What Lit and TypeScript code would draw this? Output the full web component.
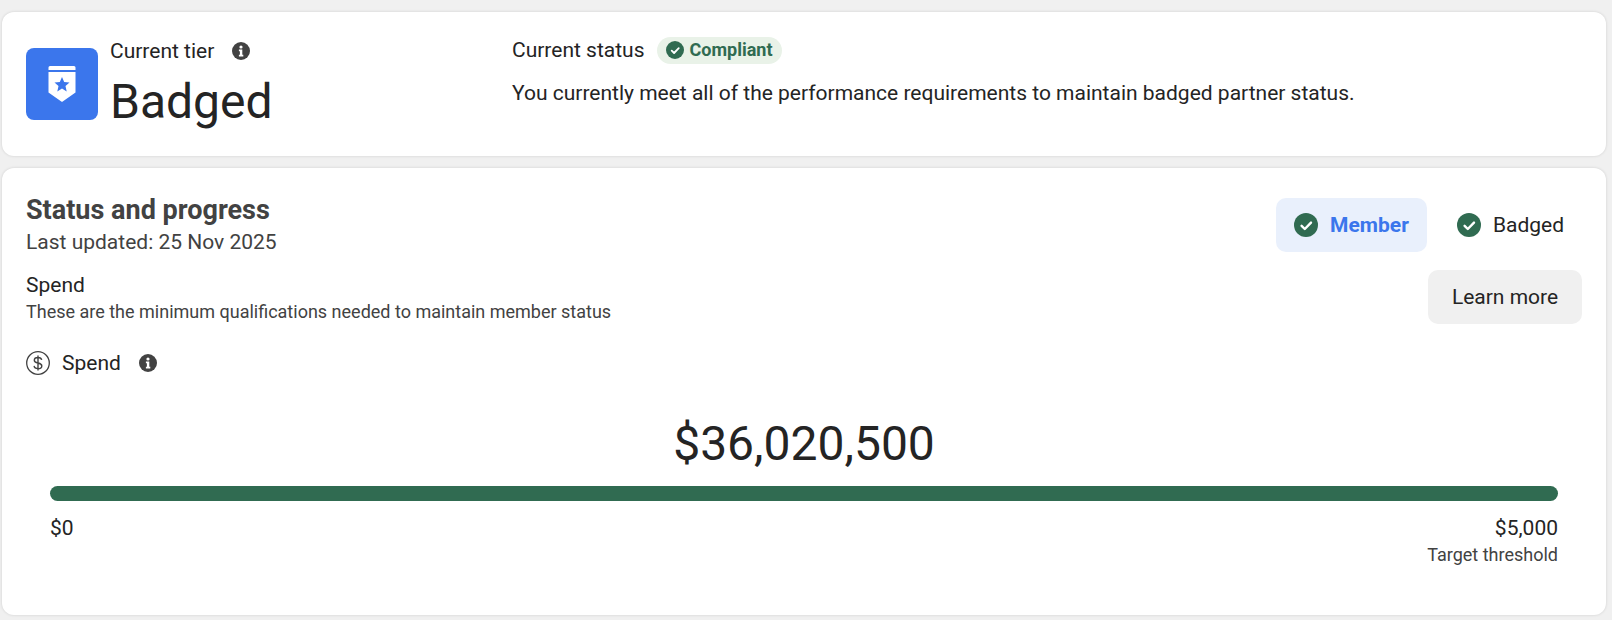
import { css, html, LitElement } from "lit";
import { customElement } from "lit/decorators.js";

const infoIcon = html`<svg class="info" viewBox="0 0 18 18" width="18" height="18">
  <circle cx="9" cy="9" r="9" fill="#424242"></circle>
  <circle cx="9" cy="5" r="1.6" fill="#fff"></circle>
  <path d="M6.9 7.6h3.4v5.2h1v1.6H6.9v-1.6h1v-3.6h-1z" fill="#fff"></path>
</svg>`;

const checkIcon = (size: number) => html`<svg viewBox="0 0 24 24" width=${size} height=${size}>
  <circle cx="12" cy="12" r="12" fill="#306b51"></circle>
  <path d="M7.6 12.8l3.200 3.200L17 9.600" fill="none" stroke="#fff" stroke-width="2.400" stroke-linecap="round" stroke-linejoin="round"></path>
</svg>`;

@customElement("app-root")
export class AppRoot extends LitElement {
    render() {
        return html`
      <section class="card tier-card">
        <div class="tier">
          <div class="tier-icon">
            <svg viewBox="0 0 28 36" width="28" height="36">
              <path d="M2 0h24a1.500 1.500 0 0 1 1.500 1.500V4H.5V1.500A1.500 1.500 0 0 1 2 0z" fill="#fff"></path>
              <path fill-rule="evenodd" fill="#fff" d="M.5 6h27v20.500L14.700 35.500a1.300 1.300 0 0 1-1.400 0L.5 26.500zM14 11l-2.200 5-5.300.5 4 3.600-1.200 5.300L14 22.600l4.700 2.800-1.200-5.300 4-3.600-5.300-.5z"></path>
            </svg>
          </div>
          <div class="tier-text">
            <div class="tier-label"><span>Current tier</span>${infoIcon}</div>
            <div class="tier-name">Badged</div>
          </div>
        </div>
        <div class="status">
          <div class="status-line">
            <span>Current status</span>
            <span class="pill">${checkIcon(18)}Compliant</span>
          </div>
          <div class="status-text">You currently meet all of the performance requirements to maintain badged partner status.</div>
        </div>
      </section>

      <section class="card progress-card">
        <div class="progress-head">
          <div>
            <h2>Status and progress</h2>
            <div class="updated">Last updated: 25 Nov 2025</div>
          </div>
          <div class="tabs">
            <div class="tab active">${checkIcon(24)}<span>Member</span></div>
            <div class="tab">${checkIcon(24)}<span>Badged</span></div>
          </div>
        </div>
        <div class="spend-head">
          <div class="spend-copy">
            <div>Spend</div>
            <div class="spend-sub">These are the minimum qualifications needed to maintain member status</div>
          </div>
          <button>Learn more</button>
        </div>
        <div class="metric">
          <svg viewBox="0 0 24 24" width="24" height="24">
            <circle cx="12" cy="12" r="11.300" fill="none" stroke="#424242" stroke-width="1.300"></circle>
            <path d="M15.700 8.900c-.3-1.500-1.700-2.400-3.700-2.400-2.100 0-3.700 1-3.700 2.700 0 3.900 7.500 1.800 7.500 5.700 0 1.700-1.600 2.700-3.800 2.700s-3.700-1-3.900-2.700M12 4.500v15" fill="none" stroke="#424242" stroke-width="1.400"></path>
          </svg>
          <span>Spend</span>
          ${infoIcon}
        </div>
        <div class="amount">$36,020,500</div>
        <div class="bar"></div>
        <div class="scale">
          <div>$0</div>
          <div class="target">
            <div>$5,000</div>
            <div class="target-label">Target threshold</div>
          </div>
        </div>
      </section>
    `;
    }

    static styles = css`
      :host {
        display: flex;
        flex-direction: column;
        gap: 12px;
        box-sizing: border-box;
        width: 1612px;
        height: 620px;
        padding: 12px 6px 5px 2px;
        background: #f0f0f0;
        font-family: Roboto, sans-serif;
        font-size: 21px;
        line-height: 28px;
        color: #242424;
      }

      .card {
        box-sizing: border-box;
        background: #fff;
        border-radius: 12px;
        box-shadow: 0 0 3px rgba(0, 0, 0, 0.14);
      }

      .tier-card {
        display: flex;
        height: 144px;
        padding: 24px;
      }

      .tier {
        display: flex;
        gap: 12px;
        width: 486px;
      }

      .tier-icon {
        display: flex;
        align-items: center;
        justify-content: center;
        width: 72px;
        height: 72px;
        margin-top: 12px;
        border-radius: 8px;
        background: #3b76ec;
      }

      .tier-text {
        padding-top: 1px;
      }

      .tier-label {
        display: flex;
        align-items: center;
        gap: 18px;
      }

      .tier-name {
        margin-top: 9px;
        font-size: 48px;
        line-height: 56px;
      }

      .status-line {
        display: flex;
        align-items: center;
        gap: 12px;
      }

      .pill {
        display: flex;
        align-items: center;
        gap: 6px;
        height: 27px;
        padding: 0 9px;
        border-radius: 14px;
        background: #e9f2e8;
        color: #306b51;
        font-size: 18px;
        font-weight: 700;
      }

      .status-text {
        margin-top: 15px;
      }

      .progress-card {
        flex: 1;
        padding: 24px;
      }

      .progress-head,
      .spend-head {
        display: flex;
        justify-content: space-between;
        align-items: flex-start;
      }

      h2 {
        margin: 0;
        font-size: 27px;
        line-height: 36px;
        font-weight: 700;
        color: #424242;
      }

      .updated {
        color: #424242;
      }

      .tabs {
        display: flex;
        gap: 12px;
        margin-top: 6px;
      }

      .tab {
        display: flex;
        align-items: center;
        gap: 12px;
        height: 54px;
        padding: 0 18px;
        border-radius: 10px;
      }

      .tab.active {
        background: #e9f0fc;
        color: #3b76ec;
        font-weight: 700;
      }

      .spend-head {
        margin-top: 14px;
      }

      .spend-copy {
        padding-top: 1px;
      }

      .spend-sub {
        margin-top: 1px;
        font-size: 18px;
        line-height: 24px;
        color: #424242;
      }

      button {
        width: 154px;
        height: 54px;
        border: none;
        border-radius: 10px;
        background: #f0f0f0;
        color: #242424;
        font: 21px Roboto, sans-serif;
      }

      .metric {
        display: flex;
        align-items: center;
        gap: 12px;
        margin-top: 25px;
      }

      .metric .info {
        margin-left: 6px;
      }

      .amount {
        margin-top: 39px;
        text-align: center;
        font-size: 48px;
        line-height: 56px;
      }

      .bar {
        height: 15px;
        margin: 14px 24px 0;
        border-radius: 8px;
        background: #306b51;
      }

      .scale {
        display: flex;
        justify-content: space-between;
        margin: 13px 24px 0;
      }

      .target {
        text-align: right;
      }

      .target-label {
        margin-top: 1px;
        font-size: 18px;
        line-height: 24px;
        color: #424242;
      }
    `;
}
